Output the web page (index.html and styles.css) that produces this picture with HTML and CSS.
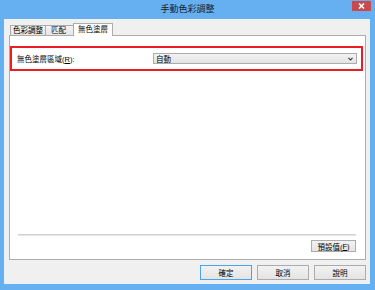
FILE: index.html
```html
<!DOCTYPE html>
<html>
    <head>
        <title>手動色彩調整</title>
        <link rel="stylesheet" href="styles.css">
    </head>
<body>
    <div class="window">
        <div class="titlebar">
            <div class="title">手動色彩調整</div>
            <div class="close">
                <svg width="7" height="6" viewBox="0 0 7 6"><path d="M1 0.5 L6 5.5 M6 0.5 L1 5.5" stroke="#fff" stroke-width="1.6"/></svg>
            </div>
        </div>
        <div class="client">
            <div class="tabs">
                <div class="tab tab-color">色彩調整</div>
                <div class="tab tab-match">匹配</div>
                <div class="tab tab-active">無色塗層</div>
            </div>
            <div class="panel">
                <div class="highlight">
                    <span class="label">無色塗層區域(<u>R</u>):</span>
                    <div class="select">
                        <span>自動</span>
                        <svg width="5" height="4" viewBox="0 0 5 4"><path d="M0.5 0.8 L2.5 3 L4.5 0.8" fill="none" stroke="#333" stroke-width="1.1"/></svg>
                    </div>
                </div>
                <div class="spacer"></div>
                <div class="panel-footer">
                    <div class="divider"></div>
                    <div class="btn btn-small">預設值(<u>F</u>)</div>
                </div>
            </div>
            <div class="buttons">
                <div class="btn btn-default">確定</div>
                <div class="btn">取消</div>
                <div class="btn">說明</div>
            </div>
        </div>
    </div>
</body>
</html>
```

FILE: styles.css
```css
body {
    margin: 0;
    font-family: "Liberation Sans", "Noto Sans CJK TC", sans-serif;
    color: #000;
}

.window {
    width: 375px;
    height: 290px;
    background-color: #66b0f2;
    display: flex;
    flex-direction: column;
    box-sizing: border-box;
}

.titlebar {
    height: 19px;
    display: grid;
    grid-template-columns: 1fr auto 1fr;
    align-items: center;
}

.title {
    grid-column: 2;
    font-size: 9px;
    line-height: 19px;
    color: #1a1a1a;
}

.close {
    grid-column: 3;
    justify-self: end;
    align-self: start;
    margin: 1px 4px 0 0;
    width: 19px;
    height: 10px;
    background-color: #c9494c;
    display: flex;
    align-items: center;
    justify-content: center;
}

.client {
    flex: 1;
    margin: 0 5px 6px 4px;
    border: 1px solid #e6f1fb;
    border-top: none;
    background-color: #f0f0f0;
    padding: 4px 3px 3px 4px;
    display: flex;
    flex-direction: column;
}

.tabs {
    height: 12px;
    display: flex;
    align-items: flex-end;
    padding-left: 1px;
}

.tab {
    box-sizing: border-box;
    height: 10px;
    border: 1px solid #acacac;
    border-bottom: none;
    background: linear-gradient(#f3f3f3, #e6e6e6);
    font-size: 7.5px;
    line-height: 9px;
    text-align: center;
}

.tab-color { width: 36px; }

.tab-match {
    width: 29px;
    margin-left: -1px;
    text-align: left;
    padding-left: 5px;
}

.tab-active {
    width: 40px;
    height: 13px;
    margin-left: -1px;
    margin-bottom: -1px;
    background: #fff;
    line-height: 11px;
    position: relative;
    z-index: 1;
}

.panel {
    flex: 1;
    background-color: #fff;
    border: 1px solid #acacac;
    display: flex;
    flex-direction: column;
    padding-bottom: 7px;
}

.highlight {
    margin: 10px 2px 0 0;
    height: 25px;
    box-sizing: border-box;
    border: 2px solid #ec1c24;
    padding: 0 4px 0 5px;
    display: grid;
    grid-template-columns: 136px 1fr;
    align-items: center;
}

.label {
    font-size: 7.5px;
}

.select {
    height: 11px;
    box-sizing: border-box;
    border: 1px solid #acacac;
    background: linear-gradient(#f3f3f3, #e3e3e3);
    display: flex;
    align-items: center;
    justify-content: space-between;
    padding: 0 3px 0 2px;
    font-size: 7.5px;
}

.spacer {
    flex: 1;
}

.panel-footer {
    padding: 0 9px 0 8px;
    display: flex;
    flex-direction: column;
    align-items: flex-end;
}

.divider {
    align-self: stretch;
    border-top: 1px solid #d2d2d2;
    border-bottom: 1px solid #e4e4e4;
    margin-bottom: 4px;
}

.btn {
    width: 52px;
    height: 15px;
    box-sizing: border-box;
    border: 1px solid #acacac;
    background: linear-gradient(#f2f2f2, #e4e4e4);
    font-size: 7.5px;
    display: flex;
    align-items: center;
    justify-content: center;
}

.btn-small {
    width: 45px;
    height: 12px;
}

.btn-default {
    border-color: #4aa3ee;
}

.buttons {
    display: flex;
    justify-content: flex-end;
    gap: 5px;
    margin-top: 5px;
}
```
